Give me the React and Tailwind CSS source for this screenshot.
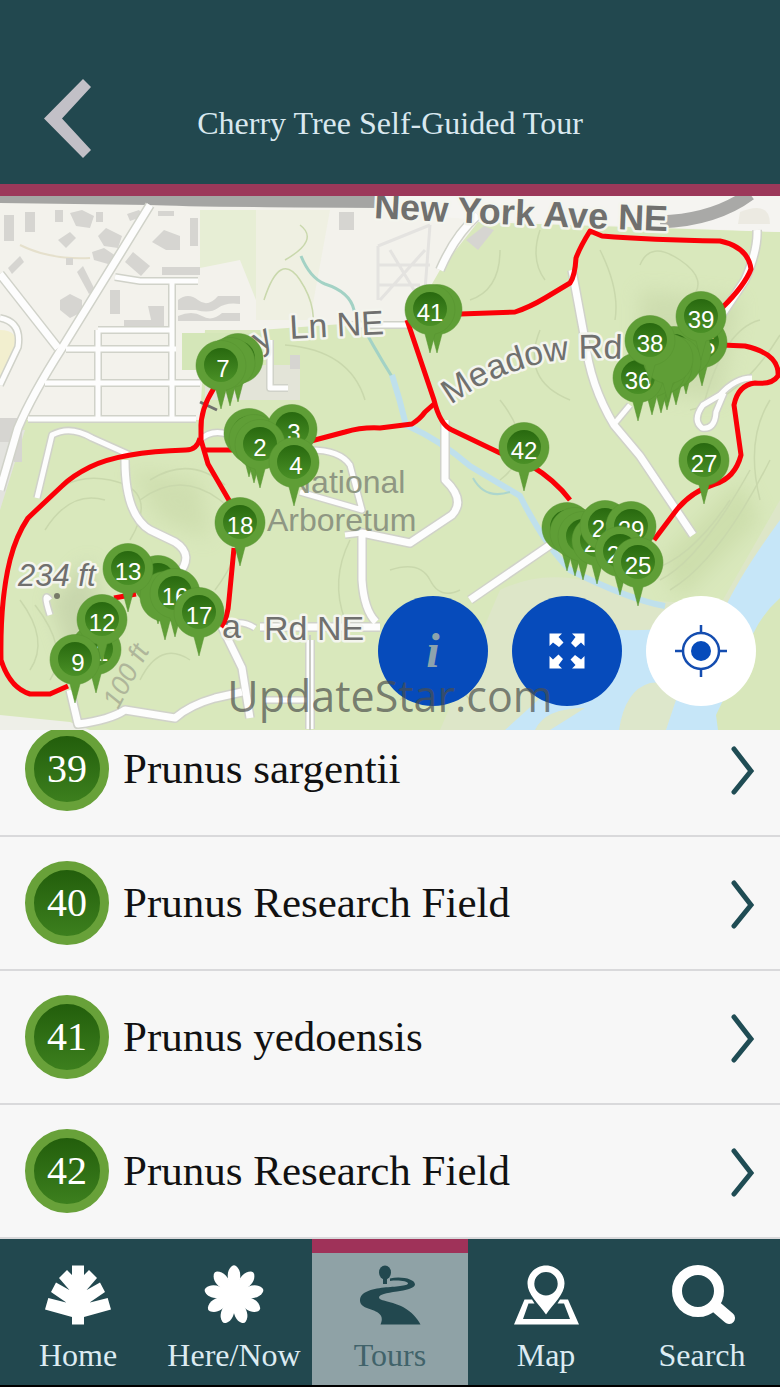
import React from 'react';

const stops = [
  { id: 39, name: 'Prunus sargentii' },
  { id: 40, name: 'Prunus Research Field' },
  { id: 41, name: 'Prunus yedoensis' },
  { id: 42, name: 'Prunus Research Field' },
];

// drawn back to front
const pins = [
  { x: 238, y: 359, label: '' },
  { x: 230, y: 363, flat: true },
  { x: 221, y: 366, label: '7', dx: 2 },
  { x: 437, y: 310, flat: true },
  { x: 430, y: 310, label: '41' },
  { x: 249, y: 434, label: '' },
  { x: 254, y: 440, flat: true },
  { x: 292, y: 430, label: '3', dx: 2 },
  { x: 260, y: 445, label: '2' },
  { x: 294, y: 463, label: '4', dx: 2 },
  { x: 524, y: 448, label: '42' },
  { x: 704, y: 461, label: '27' },
  { x: 702, y: 343, label: '35' },
  { x: 686, y: 351, flat: true },
  { x: 674, y: 352, label: '' },
  { x: 676, y: 362, flat: true },
  { x: 667, y: 367, flat: true },
  { x: 661, y: 370, flat: true },
  { x: 652, y: 372, flat: true },
  { x: 638, y: 378, label: '36' },
  { x: 668, y: 359, flat: true },
  { x: 650, y: 341, label: '38' },
  { x: 701, y: 317, label: '39' },
  { x: 240, y: 523, label: '18' },
  { x: 158, y: 581, label: '' },
  { x: 165, y: 597, flat: true },
  { x: 175, y: 594, label: '16' },
  { x: 128, y: 569, label: '13' },
  { x: 199, y: 613, label: '17' },
  { x: 96, y: 650, label: '11' },
  { x: 102, y: 620, label: '12' },
  { x: 75, y: 660, label: '9', dx: 3 },
  { x: 567, y: 528, label: '' },
  { x: 575, y: 533, flat: true },
  { x: 583, y: 537, label: '' },
  { x: 597, y: 541, label: '22' },
  { x: 605, y: 526, label: '28' },
  { x: 631, y: 527, label: '29' },
  { x: 620, y: 552, label: '24' },
  { x: 638, y: 563, label: '25' },
];

const wideRoads = [
  'M150 205 L62 348 Q32 395 18 428 L0 490',
  'M0 274 L58 348',
  'M572 270 L585 340 Q590 385 614 425 L640 456 L693 535',
  'M757 230 Q758 250 745 280 L715 325',
  'M440 270 Q455 235 478 215',
  'M445 420 L445 480 Q466 500 452 515 L410 543 L362 533 L362 580 Q364 610 376 622',
  'M310 640 V729',
  'M260 627 H380',
  'M470 600 L550 545',
  'M125 460 Q125 515 150 530 L175 542 Q195 555 178 575',
  'M70 690 L78 724 Q110 720 125 710 L175 718 Q190 705 215 698 L242 692',
  'M222 627 L242 668 L250 718',
];

const narrowRoads = [
  'M115 277 L140 281 H198',
  'M172 281 V420',
  'M98 330 H172',
  'M98 330 V420',
  'M66 349 H176',
  'M45 383 H200',
  'M28 419 H196',
  'M0 318 Q22 322 18 347 L0 385',
  'M37 498 L52 435 Q70 425 92 438 L130 455',
  'M200 440 Q215 425 240 440',
  'M350 325 H412',
  'M270 340 V388 H288',
  'M310 450 Q340 450 350 465 L362 510 L300 492',
  'M362 533 L345 535',
  'M615 423 L630 405',
  'M752 378 Q735 378 720 395 L703 405 Q692 420 702 428 Q715 430 716 412 L724 393',
  'M50 600 Q42 590 50 615',
  'M265 700 H310',
  'M222 627 Q240 618 255 628',
];

const contours = [
  'M264 300 Q280 250 300 280 T310 340',
  'M300 225 Q320 240 285 260',
  'M30 520 Q60 470 110 480 T130 540',
  'M45 530 Q70 490 105 500',
  'M140 500 Q180 470 220 500 T215 590',
  'M150 480 Q190 455 225 485',
  'M20 600 Q50 640 30 670',
  'M35 605 Q70 650 50 680',
  'M500 250 Q500 290 470 300',
  'M540 230 Q530 260 545 280',
  'M600 250 Q620 290 615 320',
  'M640 265 Q650 240 680 260 T690 300',
  'M760 320 Q720 330 700 420',
  'M780 335 Q740 400 690 410',
  'M770 400 Q745 440 760 500',
  'M660 580 Q700 560 750 470',
  'M670 590 Q720 560 770 460',
  'M650 570 Q690 560 730 500',
  'M500 480 Q540 450 500 400',
  'M390 570 Q420 560 430 580 T460 590',
  'M350 540 Q330 580 345 620',
  'M285 345 Q350 350 365 400',
  'M190 660 Q160 640 140 680',
  'M400 700 Q440 660 470 700',
  'M540 330 Q520 380 570 400',
];

const buildings = [
  'M4 215h10v26h-10z', 'M25 212h10v20h-10z', 'M55 210h8v12h-8z', 'M70 213l12-3 12 6-4 12-14-2z',
  'M96 212h7v10h-7z', 'M58 240l12-8 6 6-10 10z', 'M98 236l8-8 16 8-4 12-14-2z', 'M92 252l12-4 12 8-8 8-14-4z',
  'M125 262l8-10 17 14-9 10z', 'M152 242l12-12 16 6v14l-14 0z', 'M190 218h8v28h-8z', 'M162 267h38v8h-38z',
  'M8 268l12-12 4 6-12 12z', 'M77 272l6-6 12 24-6 4z', 'M60 300l10-6 12 6v12l-12 6-10-8z', 'M110 290h10v24h-10z',
  'M124 320h40v7h-40z', 'M148 306h16v18h-12z', 'M178 300q10-8 20 0t20-4h22v8q-14-2-22 4t-22 2h-18z',
  'M178 316q14-6 24 0t20-3h18v8h-62z', 'M339 212h15v18h-15z', 'M466 240l18-14 10 4-16 20z', 'M290 355h10v14h-10z',
  'M127 214l12-4 5 6-14 5z', 'M158 211h16v5h-16z', 'M66 258h7v7h-7z', 'M0 418h22v44h-8v-20h-14z',
];

const route = [
  'M407 320 L434 400 Q440 425 452 430 L500 453 L530 465 Q555 480 570 500',
  'M311 441 L345 432 Q362 427 380 428 L412 424 Q420 419 425 412 L434 404',
  'M460 314 L515 312 Q530 307 545 298 L570 283 Q575 276 576 258 Q580 247 590 231 L602 236 Q650 240 720 241 Q748 247 751 269 Q745 285 722 308',
  'M722 345 L745 346 Q780 354 778 376 Q772 385 755 383 Q738 385 734 405 L741 455 Q735 478 715 484 Q690 492 675 512 L654 540',
  'M214 388 Q200 410 201 430 V440 L208 464 L230 502',
  'M200 438 Q197 450 186 450 Q120 452 90 467 Q72 476 62 486 L28 518 Q16 536 10 560 Q0 600 1 660 Q10 688 30 694 H50 L68 686',
  'M204 450 H232',
  'M234 548 L229 600 Q228 618 221 627',
  'M114 598 L136 594',
];

const Pin = ({ x, y, label, flat, dx = 0 }) => (
  <g transform={`translate(${x} ${y})`}>
    <path
      d="M0 43 L-5 24 A25 25 0 1 1 5 24 Z"
      fill="#5f9e36"
      stroke="#579231"
      strokeWidth="0.5"
    />
    {!flat && <circle cy="-1" r="17" fill="url(#pinFill)" />}
    {label && (
      <text
        x={dx}
        y="11"
        textAnchor="middle"
        fill="#fff"
        className="font-['Liberation_Sans',Arial,sans-serif] text-[24px]"
      >
        {label}
      </text>
    )}
  </g>
);

const TourMap = () => (
  <svg
    viewBox="0 196 780 534"
    role="img"
    aria-label="Tour map"
    className="block h-auto w-full font-['Liberation_Sans',Arial,sans-serif]"
  >
    <defs>
      <linearGradient id="pinFill" x1="0" y1="0" x2="0" y2="1">
        <stop offset="0" stopColor="#28690f" />
        <stop offset="1" stopColor="#4a9026" />
      </linearGradient>
      <path id="meadowPath" d="M451 405 Q485 380 522 369 Q562 354 640 360" />
      <path id="avenuePath" d="M374 218 Q520 226 690 232" />
      <filter id="shade" x="-20%" y="-20%" width="140%" height="140%">
        <feGaussianBlur stdDeviation="10" />
      </filter>
    </defs>

    {/* Land */}
    <rect y="196" width="780" height="534" fill="#f3f2ec" />
    <path d="M200 210 H256 V300 L240 260 L200 268Z" fill="#e7eed5" />
    <path d="M256 210 H330 L310 320 H256Z" fill="#eff0e2" />
    <path d="M0 330 Q20 330 16 350 L0 380Z" fill="#f2efcf" />
    <path d="M16 440 L26 420 H200 L205 330 H260 L370 322 H410 L440 270 L478 222 L780 232 V730 H0 V500Z" fill="#d9e8bc" />
    <path d="M182 333 H262 V370 H182Z" fill="#d4e6b8" />
    <path d="M0 430 H25 L0 510Z" fill="#e3e3df" />
    <path d="M0 715 L70 722 L90 730 H0Z" fill="#eeefe8" />
    <g filter="url(#shade)" opacity="0.35">
      <path d="M50 600 L90 560 L110 640 L70 660Z" fill="#a9b690" />
      <path d="M130 470 L200 480 L210 540 L160 520Z" fill="#bccc98" />
      <path d="M640 290 L740 300 L720 400 L640 390Z" fill="#b8c898" />
      <path d="M660 560 L740 480 L760 520 L680 600Z" fill="#b8cc90" />
    </g>
    <path d="M205 365 H300 V400 H205Z" fill="#e3e4d8" />

    {/* Water */}
    <path d="M500 590 Q560 560 640 600 L720 605 L780 500 V560 L720 640 L640 730 H440Z" fill="#dde6c8" />
    <path d="M780 520 Q740 575 724 610 Q700 632 620 630 Q580 640 560 680 L505 730 H780Z" fill="#c6e6f8" />
    <path d="M780 598 Q755 620 745 655 L716 715 L718 730 H780Z" fill="#d8e7bb" />
    <path d="M619 730 Q625 690 650 683 Q675 680 676 700 L666 730Z" fill="#dde7cb" />
    <path d="M535 730 Q545 708 585 708 L550 730Z" fill="#dde7cb" />
    <path d="M301 256 Q310 278 325 284 Q350 292 354 310 Q372 345 394 380" fill="none" stroke="#a3d2c5" strokeWidth="3" />
    <path d="M392 375 Q400 400 406 425 Q440 440 470 466 L520 496 Q545 545 570 570 Q630 600 665 606" fill="none" stroke="#bfe0ec" strokeWidth="6" />
    <path d="M473 478 Q485 500 510 492" fill="none" stroke="#add6cd" strokeWidth="2" />

    {contours.map((d) => (
      <path key={d} d={d} fill="none" stroke="#c9d8ac" strokeWidth="1.5" />
    ))}
    <path d="M20 245 Q50 260 90 258" fill="none" stroke="#e5e0cc" strokeWidth="2" />
    {buildings.map((d) => (
      <path key={d} d={d} fill="#d6d5d1" />
    ))}

    {/* Roads */}
    <path d="M0 196 H380 V208 Q190 207 150 205 L0 203Z" fill="#a5a5a3" />
    <path d="M380 196 H780 V232 L480 220 L380 212Z" fill="#f5f4f1" />
    <path d="M660 222 Q715 220 750 194" fill="none" stroke="#a9a9a7" strokeWidth="13" />
    <path d="M740 212 Q770 200 770 224 H738Z" fill="#eceae2" />
    <g fill="none" stroke="#e4e3e0" strokeWidth="3">
      <path d="M378 246 V300 M378 246 L430 225 M378 265 H430 M380 300 L425 250 M390 250 L420 300 M430 225 L425 290 M378 285 H420" />
    </g>
    <g fill="none" stroke="#d0d2c9" strokeLinejoin="round">
      {wideRoads.map((d) => (
        <path key={d} d={d} strokeWidth="10" />
      ))}
      {narrowRoads.map((d) => (
        <path key={d} d={d} strokeWidth="8" />
      ))}
    </g>
    <g fill="none" stroke="#fdfdfd" strokeLinejoin="round">
      {wideRoads.map((d) => (
        <path key={d} d={d} strokeWidth="7" />
      ))}
      {narrowRoads.map((d) => (
        <path key={d} d={d} strokeWidth="5" />
      ))}
    </g>
    <path d="M310 635 V730" stroke="#c9cbc3" strokeWidth="2" />

    {/* Place names */}
    <g fill="#70706e" stroke="#f4f5ee" strokeWidth="5" strokeLinejoin="round" paintOrder="stroke">
      <text className="text-[36px] font-bold">
        <textPath href="#avenuePath">New York Ave NE</textPath>
      </text>
      <text className="text-[34px]">
        <textPath href="#meadowPath">Meadow Rd</textPath>
      </text>
      <text x="290" y="339" transform="rotate(-3 290 339)" className="text-[34px]">Ln NE</text>
      <text x="260" y="352" transform="rotate(-30 260 352)" className="text-[34px]">y</text>
      <text x="222" y="638" className="text-[34px]">a</text>
      <text x="264" y="640" className="text-[34px]">Rd NE</text>
      <text x="18" y="586" className="text-[31px] italic">234 ft</text>
    </g>
    <path d="M200 402 L217 410" stroke="#70706e" strokeWidth="3" />
    <circle cx="57" cy="596" r="3" fill="#777b68" />
    <g fill="#8f9783">
      <text x="288" y="493" className="text-[32px]">National</text>
      <text x="267" y="531" className="text-[32px]">Arboretum</text>
    </g>
    <text x="118" y="710" transform="rotate(-62 118 710)" fill="#afb69a" className="text-[27px] italic">100 ft</text>

    <g fill="none" stroke="#fb0007" strokeWidth="5" strokeLinejoin="round">
      {route.map((d) => (
        <path key={d} d={d} />
      ))}
    </g>

    {pins.map((pin) => (
      <Pin key={`${pin.x}-${pin.y}`} {...pin} />
    ))}
  </svg>
);

const HomeIcon = () => (
  <svg viewBox="0 0 66 60" className="h-[60px] w-[66px]" fill="currentColor" aria-hidden="true">
    <path d="M27 0.500H39V59.500H27Z" />
    <path id="fronds" d="M14 13 22 5 28 11 33 12V32L27 28ZM6 27 11 17.500 27 26.500 33 27V46L25 40ZM0 44.500 3.300 33 25 38.500 33 38V54L27 52Z" />
    <use href="#fronds" transform="translate(66 0) scale(-1 1)" />
  </svg>
);

const FlowerIcon = () => (
  <svg viewBox="-30 -30 60 60" className="size-[60px]" fill="currentColor" aria-hidden="true">
    {[0, 40, 80, 120, 160, 200, 240, 280, 320].map((angle) => (
      <path key={angle} d="M-3 -6 C-8 -18 -7 -25 -2 -29 Q0 -30.500 2 -29 C7 -25 8 -18 3 -6Z" transform={`rotate(${angle})`} />
    ))}
    <circle r="12" />
  </svg>
);

const TrailIcon = () => (
  <svg viewBox="0 0 62 60" className="h-[60px] w-[62px]" fill="currentColor" aria-hidden="true">
    <ellipse cx="26" cy="7.500" rx="6" ry="7" />
    <path d="M24 12H28V19H24Z" />
    <path d="M31 13.500C42 11 56 14 56 19.500C56 23 46 25.500 38 26.500C27 28 20 29.500 20 32.500C20 36 34 36.500 44 42C53 47 58 53 61.500 59.500H21.500C24 54 23 50 18 47C12 43.500 1 43 1 35.500C1 27 12 24 25 22.500C36 21.500 49 21 49 18.500C49 16 39 15 31 16Z" />
  </svg>
);

const MapIcon = () => (
  <svg viewBox="0 0 65 60" className="h-[60px] w-[65px]" fill="currentColor" fillRule="evenodd" aria-hidden="true">
    <path d="M32 0.500C42 0.500 50.500 8.500 50.500 18.500C50.500 29 40 38 32 49.500C24 38 13.500 29 13.500 18.500C13.500 8.500 22 0.500 32 0.500ZM32 7A11.700 11.700 0 1 0 32 30.400A11.700 11.700 0 1 0 32 7Z" />
    <path d="M10.500 34.500H18L20.500 38.500H14.500L9 54H56L50 38.500H43.500L46 34.500H54L65 59.500H0Z" />
  </svg>
);

const SearchIcon = () => (
  <svg viewBox="0 0 66 60" className="h-[60px] w-[66px]" fill="none" stroke="currentColor" aria-hidden="true">
    <circle cx="29" cy="26" r="21" strokeWidth="10" />
    <path d="M46 41 L60 53" strokeWidth="12" strokeLinecap="round" />
  </svg>
);

const tabs = [
  { label: 'Home', Icon: HomeIcon },
  { label: 'Here/Now', Icon: FlowerIcon },
  { label: 'Tours', Icon: TrailIcon, active: true },
  { label: 'Map', Icon: MapIcon },
  { label: 'Search', Icon: SearchIcon },
];

const App = () => {
  return (
    <div className="flex min-h-screen flex-col bg-[#f7f7f7] font-['Liberation_Serif','Times_New_Roman',serif]">
      {/* Header */}
      <header className="grid grid-cols-[1fr_auto_1fr] items-center border-b-[12px] border-[#9c385a] bg-[#22484f] px-11 pt-[66px] pb-[13px]">
        <button type="button" aria-label="Back" className="justify-self-start py-[13px]">
          <svg viewBox="0 0 47 79" className="block h-[79px] w-[47px]" fill="#c2c0c7">
            <path d="M39 0 L47 8 L18 39.500 L47 71 L39 79 L0 39.500Z" />
          </svg>
        </button>
        <h1 className="pt-2 text-[32px] leading-9 text-[#d9e8ef]">Cherry Tree Self-Guided Tour</h1>
      </header>

      {/* Map */}
      <section className="relative overflow-hidden">
        <TourMap />
        <div className="absolute right-6 bottom-6 flex gap-6">
          <button
            type="button"
            aria-label="Tour information"
            className="flex size-[110px] items-center justify-center rounded-full bg-[#064bbb] text-5xl font-bold text-[#8da3ad] italic"
          >
            i
          </button>
          <button
            type="button"
            aria-label="Full screen"
            className="flex size-[110px] items-center justify-center rounded-full bg-[#064bbb]"
          >
            <svg viewBox="0 0 36 36" className="size-9" fill="#fff">
              {[0, 90, 180, 270].map((angle) => (
                <path key={angle} d="M0.500 0.500H13L9.500 4L14.500 9.500L10 14L4 9.500L0.500 13Z" transform={`rotate(${angle} 18 18)`} />
              ))}
            </svg>
          </button>
          <button
            type="button"
            aria-label="My location"
            className="flex size-[110px] items-center justify-center rounded-full bg-white"
          >
            <svg viewBox="0 0 52 52" className="size-[52px]" fill="none" stroke="#144db0">
              <circle cx="26" cy="26" r="18" strokeWidth="2.500" />
              <circle cx="26" cy="26" r="10" fill="#064bbb" stroke="none" />
              <path d="M26 0V8M26 44V52M0 26H8M44 26H52" strokeWidth="2.500" />
            </svg>
          </button>
        </div>
        <p className="pointer-events-none absolute inset-x-0 bottom-1.5 text-center font-['Open_Sans','Noto_Sans',sans-serif] text-[43px] leading-[56px] text-[#4b4f4b]/70">
          UpdateStar.com
        </p>
      </section>

      {/* Stops, scrolled part of a row */}
      <ul className="flex-1 overflow-hidden">
        {stops.map((stop) => (
          <li key={stop.id} className="border-b-2 border-[#d9d9db] first:-mt-[27px]">
            <a href={`#stop-${stop.id}`} className="flex h-[132px] items-center gap-3.5 px-[25px]">
              <span className="flex size-[84px] shrink-0 items-center justify-center rounded-full border-[9px] border-[#68a139] bg-linear-to-b from-[#1f5a09] to-[#408420] bg-origin-border text-[40px] leading-none text-white">
                {stop.id}
              </span>
              <span className="flex-1 text-[43px] leading-[48px] text-[#111]">{stop.name}</span>
              <svg viewBox="0 0 24 52" className="h-[52px] w-6" fill="none" stroke="#1f4c54" strokeWidth="5" aria-hidden="true">
                <path d="M3 6 L20 28 L3 49" strokeLinecap="round" />
              </svg>
            </a>
          </li>
        ))}
      </ul>

      {/* Bottom tabs */}
      <nav className="grid grid-cols-5 border-b-2 border-black bg-[#22484f]">
        {tabs.map(({ label, Icon, active }) => (
          <a
            key={label}
            href={`#${label}`}
            aria-current={active ? 'page' : undefined}
            className={`flex flex-col items-center gap-3 border-t-[14px] py-3 ${
              active ? 'border-[#9f3259] bg-[#8fa2a6] text-[#22484f]' : 'border-transparent text-white'
            }`}
          >
            <Icon />
            <span className={`text-[32px] leading-9 ${active ? 'text-[#41636a]' : 'text-[#dcebf2]'}`}>{label}</span>
          </a>
        ))}
      </nav>
    </div>
  );
};

export default App;
